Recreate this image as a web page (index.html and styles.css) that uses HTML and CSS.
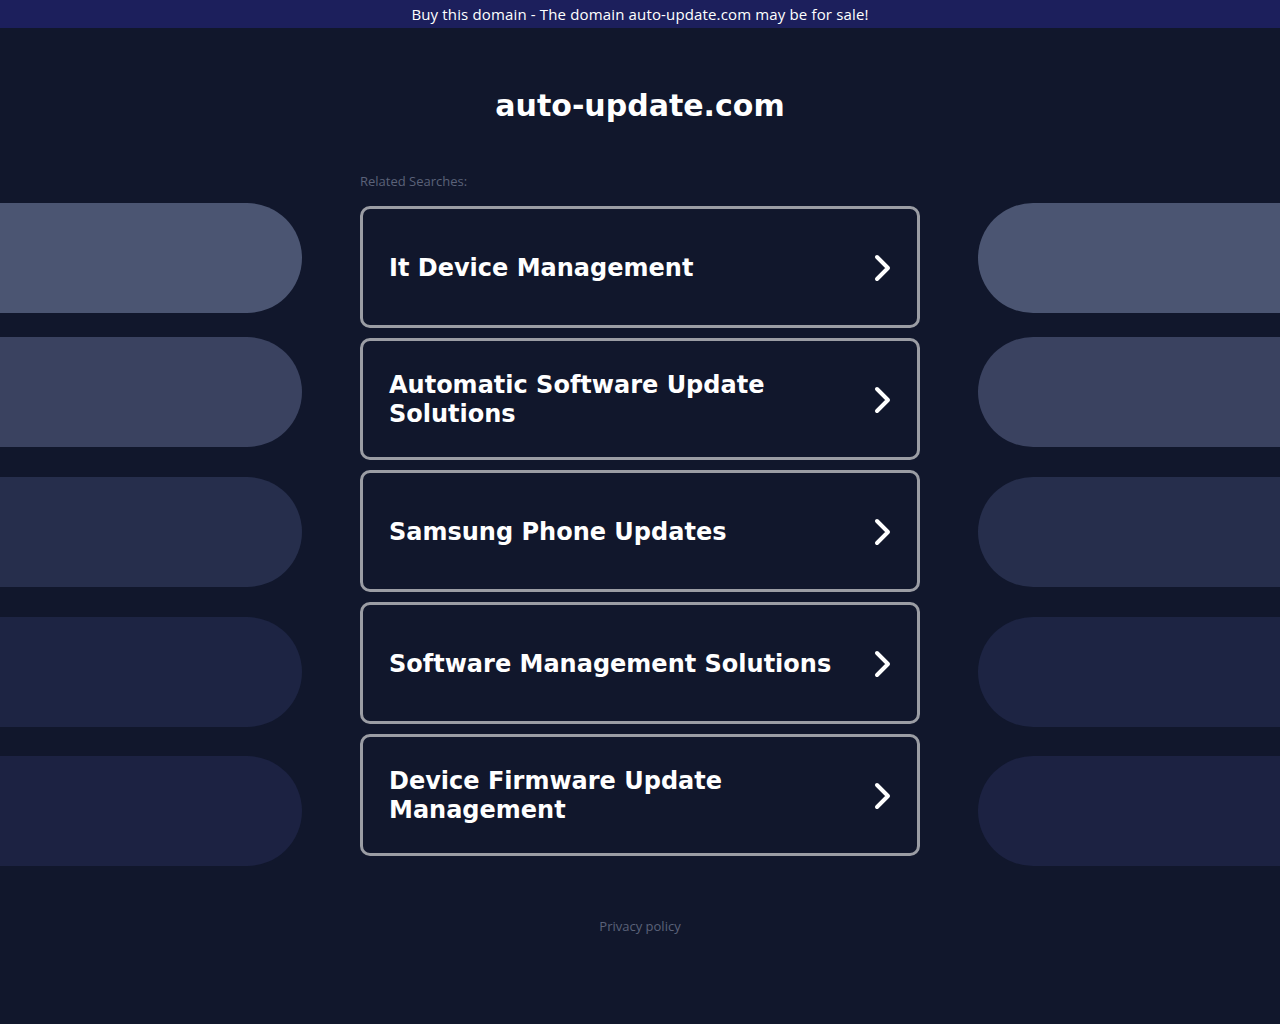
FILE: index.html
```html
<!DOCTYPE html>
<html lang="en">
<head>
  <meta charset="UTF-8" />
  <meta name="viewport" content="width=device-width, initial-scale=1.0"/>
  <title>auto-update.com</title>
  <link rel="stylesheet" href="styles.css">
</head>
<body>
  <div class="banner">Buy this domain - The domain auto-update.com may be for sale!</div>

  <div class="page">
    <div class="side side-left">
      <div class="bar bar-1"></div>
      <div class="bar bar-2"></div>
      <div class="bar bar-3"></div>
      <div class="bar bar-4"></div>
      <div class="bar bar-5"></div>
    </div>

    <main class="center">
      <h1 class="domain">auto-update.com</h1>
      <p class="label">Related Searches:</p>

      <div class="links">
        <a class="link-box" href="#">
          <span>It Device Management</span>
          <svg class="chevron" viewBox="0 0 20 28"><polyline points="4,3 15,14 4,25"/></svg>
        </a>
        <a class="link-box" href="#">
          <span>Automatic Software Update Solutions</span>
          <svg class="chevron" viewBox="0 0 20 28"><polyline points="4,3 15,14 4,25"/></svg>
        </a>
        <a class="link-box" href="#">
          <span>Samsung Phone Updates</span>
          <svg class="chevron" viewBox="0 0 20 28"><polyline points="4,3 15,14 4,25"/></svg>
        </a>
        <a class="link-box" href="#">
          <span>Software Management Solutions</span>
          <svg class="chevron" viewBox="0 0 20 28"><polyline points="4,3 15,14 4,25"/></svg>
        </a>
        <a class="link-box" href="#">
          <span>Device Firmware Update Management</span>
          <svg class="chevron" viewBox="0 0 20 28"><polyline points="4,3 15,14 4,25"/></svg>
        </a>
      </div>

      <a class="privacy" href="#">Privacy policy</a>
    </main>

    <div class="side side-right">
      <div class="bar bar-1"></div>
      <div class="bar bar-2"></div>
      <div class="bar bar-3"></div>
      <div class="bar bar-4"></div>
      <div class="bar bar-5"></div>
    </div>
  </div>
</body>
</html>
```

FILE: styles.css
```css
:root {
  --bg: #11172c;
  --banner: #1c1f5c;
  --text: #ffffff;
  --muted: #5b6279;
  --border: #9b9da4;
}

* {
  box-sizing: border-box;
}

body {
  margin: 0;
  padding: 0;
  min-height: 1024px;
  font-family: 'Open Sans', sans-serif;
  background-color: var(--bg);
  color: var(--text);
}

.banner {
  height: 28px;
  line-height: 28px;
  background: var(--banner);
  text-align: center;
  font-size: 15px;
  letter-spacing: 0.15px;
}

.page {
  display: flex;
  justify-content: space-between;
}

.side {
  width: 302px;
  padding-top: 175px;
  display: flex;
  flex-direction: column;
  gap: 30px;
}

.bar {
  height: 110px;
}

.side-left .bar {
  border-radius: 0 55px 55px 0;
}

.side-right .bar {
  border-radius: 55px 0 0 55px;
}

.bar-1 { background: #4b5572; margin-bottom: -6px; }
.bar-2 { background: #3a4260; }
.bar-3 { background: #262e4c; }
.bar-4 { background: #1d2443; margin-bottom: -1px; }
.bar-5 { background: #1c2242; }

.center {
  width: 560px;
  display: flex;
  flex-direction: column;
}

.domain {
  margin: 59px 0 0;
  font-family: 'DejaVu Sans', sans-serif;
  font-size: 30px;
  line-height: 38px;
  text-align: center;
}

.label {
  margin: 48px 0 0;
  font-size: 13px;
  line-height: 17px;
  color: var(--muted);
}

.links {
  margin-top: 16px;
  display: flex;
  flex-direction: column;
  gap: 10px;
}

.link-box {
  height: 122px;
  display: flex;
  align-items: center;
  justify-content: space-between;
  padding: 2px 24px 0 26px;
  border: 3px solid var(--border);
  border-radius: 10px;
  color: var(--text);
  text-decoration: none;
  font-family: 'DejaVu Sans', sans-serif;
  font-weight: bold;
  font-size: 24px;
  line-height: 29px;
}

.link-box span {
  max-width: 470px;
}

.chevron {
  width: 20px;
  height: 28px;
  flex-shrink: 0;
  fill: none;
  stroke: var(--text);
  stroke-width: 4;
  stroke-linecap: round;
  stroke-linejoin: round;
}

.privacy {
  margin-top: 62px;
  align-self: center;
  font-size: 13px;
  line-height: 17px;
  color: var(--muted);
  text-decoration: none;
}
```
